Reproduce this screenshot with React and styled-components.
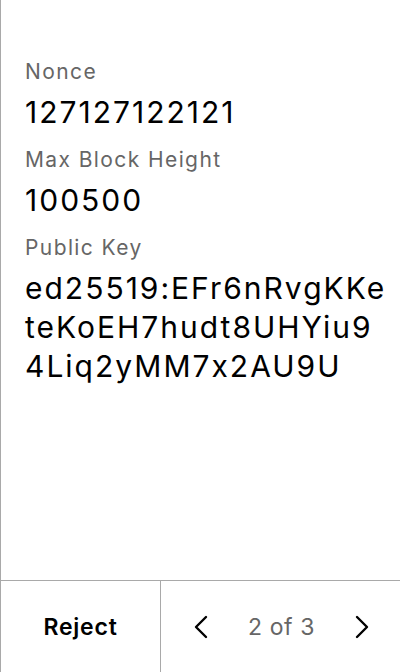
import React from 'react';
import styled, { createGlobalStyle } from 'styled-components';

const GlobalStyle = createGlobalStyle`
  html, body {
    margin: 0;
    padding: 0;
    background: #fff;
  }
  body {
    font-family: Inter, "Noto Sans", sans-serif;
    font-feature-settings: "calt" 0;
  }
`;

const Screen = styled.div`
  display: flex;
  flex-direction: column;
  width: 400px;
  height: 672px;
  box-sizing: border-box;
  border-left: 1px solid #a9a9a9;
  overflow: hidden;
`;

const Details = styled.div`
  flex: 1;
  padding: 58px 11px 0 24px;
`;

const Label = styled.div`
  font-size: 21px;
  line-height: 28px;
  letter-spacing: 1.4px;
  color: #666;
  margin-top: ${(p) => (p.first ? '0' : '14px')};
`;

const Value = styled.div`
  font-size: 30px;
  line-height: 39px;
  letter-spacing: 2px;
  color: #000;
  margin-top: 7px;
  word-break: break-all;
`;

const Footer = styled.div`
  display: grid;
  grid-template-columns: 160px 1fr;
  height: 92px;
  border-top: 1px solid #a9a9a9;
  box-sizing: border-box;
`;

const RejectButton = styled.button`
  border: none;
  border-right: 1px solid #a9a9a9;
  background: none;
  font-family: Inter, sans-serif;
  font-size: 23px;
  font-weight: 600;
  letter-spacing: 0.8px;
  color: #000;
  padding: 0;
`;

const Pager = styled.div`
  display: flex;
  align-items: center;
  justify-content: space-between;
  padding: 0 28px 0 30px;
`;

const Arrow = styled.button`
  border: none;
  background: none;
  padding: 0;
  width: 20px;
  height: 28px;
  display: flex;
  align-items: center;
  justify-content: center;
`;

const PageText = styled.span`
  font-size: 23px;
  letter-spacing: 0.6px;
  color: #666;
`;

const Chevron = ({ dir }) => (
  <svg width="14" height="24" viewBox="0 0 14 24" fill="none">
    <path
      d={dir === 'left' ? 'M12 2 L2 12 L12 22' : 'M2 2 L12 12 L2 22'}
      stroke="#000"
      strokeWidth="2.4"
      strokeLinecap="round"
      strokeLinejoin="round"
    />
  </svg>
);

export default function App() {
  return (
    <>
      <GlobalStyle />
      <Screen>
        <Details>
          <Label first>Nonce</Label>
          <Value>127127122121</Value>
          <Label>Max Block Height</Label>
          <Value>100500</Value>
          <Label>Public Key</Label>
          <Value>ed25519:EFr6nRvgKKeteKoEH7hudt8UHYiu94Liq2yMM7x2AU9U</Value>
        </Details>
        <Footer>
          <RejectButton>Reject</RejectButton>
          <Pager>
            <Arrow><Chevron dir="left" /></Arrow>
            <PageText>2 of 3</PageText>
            <Arrow><Chevron dir="right" /></Arrow>
          </Pager>
        </Footer>
      </Screen>
    </>
  );
}
